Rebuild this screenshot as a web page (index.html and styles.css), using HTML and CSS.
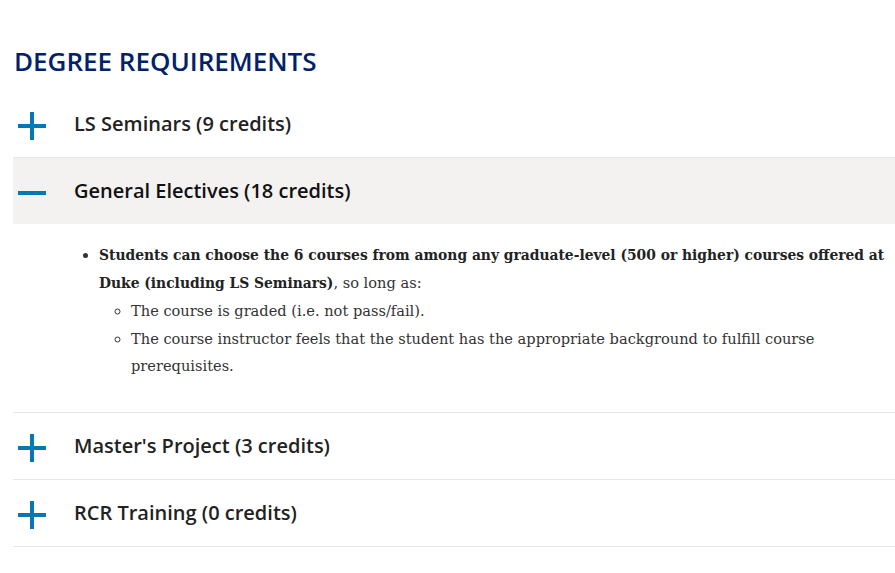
FILE: index.html
```html
<!DOCTYPE html>
<html lang="en">
<head>
<meta charset="utf-8"/>
<meta content="width=device-width, initial-scale=1.0" name="viewport"/>
<title>Degree Requirements</title>
<link rel="stylesheet" href="styles.css">
</head>
<body>
<div class="page">
<h2 class="title">DEGREE REQUIREMENTS</h2>
<div class="accordion">
  <div class="acc-item first">
    <div class="acc-head"><span class="icon plus"></span><span class="label">LS Seminars (9 credits)</span></div>
  </div>
  <div class="acc-item open">
    <div class="acc-head"><span class="icon minus"></span><span class="label">General Electives (18 credits)</span></div>
    <div class="acc-body">
      <ul>
        <li><strong>Students can choose the 6 courses from among any graduate-level (500 or higher) courses offered at Duke (including LS Seminars)</strong>, so long as:
          <ul>
            <li>The course is graded (i.e. not pass/fail).</li>
            <li>The course instructor feels that the student has the appropriate background to fulfill course prerequisites.</li>
          </ul>
        </li>
      </ul>
    </div>
  </div>
  <div class="acc-item">
    <div class="acc-head"><span class="icon plus"></span><span class="label">Master's Project (3 credits)</span></div>
  </div>
  <div class="acc-item">
    <div class="acc-head"><span class="icon plus"></span><span class="label">RCR Training (0 credits)</span></div>
  </div>
</div>
</div>
</body>
</html>
```

FILE: styles.css
```css
body {
  margin: 0;
  background: #fff;
  font-family: "Open Sans", Arial, sans-serif;
}
.page {
  padding: 0 0 0 13px;
}
.title {
  margin: 0;
  padding: 44px 0 0 1px;
  font-size: 26px;
  line-height: 34px;
  font-weight: 600;
  color: #012169;
}
.accordion {
  margin-top: 13px;
}
.acc-item {
  border-bottom: 1px solid #e6e6e6;
}
.acc-head {
  display: flex;
  align-items: center;
  height: 66px;
  cursor: pointer;
}
.acc-item.open .acc-head {
  background: #f3f2f1;
}
.label {
  margin-left: 28px;
  padding-bottom: 2px;
  font-size: 20px;
  font-weight: 600;
  color: #222;
}
.acc-item.open .label {
  color: #111;
}
.icon {
  position: relative;
  width: 28px;
  height: 28px;
  margin: 3px 0 0 5px;
}
.icon::before,
.icon::after {
  content: "";
  position: absolute;
  background: #0577b1;
}
.icon::before {
  left: 0;
  top: 12px;
  width: 28px;
  height: 4px;
}
.plus::after {
  left: 12px;
  top: 0;
  width: 4px;
  height: 28px;
}
.acc-body {
  padding: 17px 0 33px;
  font-family: "DejaVu Serif", "Liberation Serif", serif;
  font-size: 14.6px;
  line-height: 27.2px;
  color: #333;
}
.acc-body ul {
  margin: 0;
  padding-left: 86px;
}
.acc-body ul ul {
  padding-left: 32px;
  list-style: circle;
}
.acc-body strong {
  font-family: "DejaVu Serif Condensed", "DejaVu Serif", serif;
  font-size: 15.4px;
  font-weight: bold;
  color: #222;
}
```
